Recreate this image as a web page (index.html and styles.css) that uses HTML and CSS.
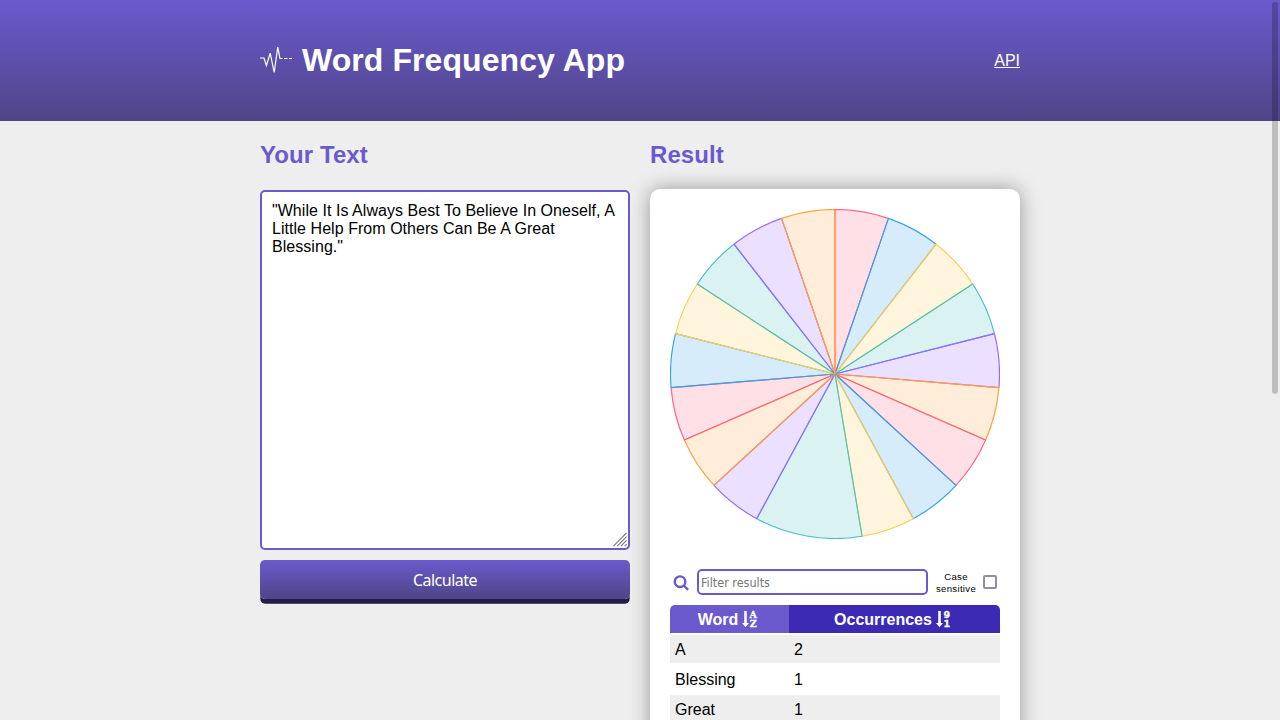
FILE: index.html
```
<!DOCTYPE html>
<html lang="en">
<head>
<meta charset="utf-8">
<title>Word Frequency App</title>
<link rel="stylesheet" href="styles.css">
</head>
<body>
<header class="header">
  <div class="container header-inner">
    <div class="brand">
      <svg class="logo" viewBox="0 0 32 32" fill="none" stroke="#fff" stroke-width="1.2"><path d="M0 14H4L6.4 21.5L10.2 9.2L14.2 28.5L17.8 3.2L20 14.5H22.4M24 14.5H27.4M29 14.5H32"/></svg>
      <h1 class="title">Word Frequency App</h1>
    </div>
    <a class="api" href="#">API</a>
  </div>
</header>
<main class="container columns">
  <section class="column">
    <h2 class="heading">Your Text</h2>
    <div class="editor">
      <textarea class="text" spellcheck="false">"While It Is Always Best To Believe In Oneself, A Little Help From Others Can Be A Great Blessing."</textarea>
      <svg class="grip" viewBox="0 0 15 15" stroke="#777" stroke-width="1.2"><path d="M.5 14.5L14.5 .5M4.5 14.5L14.5 4.5M8.5 14.5L14.5 8.5M12.5 14.5L14.5 12.5"/></svg>
    </div>
    <button class="calculate">Calculate</button>
  </section>
  <section class="column">
    <h2 class="heading">Result</h2>
    <div class="card">
      <svg class="pie" id="pie" viewBox="0 0 330 330"></svg>
      <div class="filter">
        <svg class="search" viewBox="0 0 16 16" fill="none" stroke="#6a5acd" stroke-width="2.4"><circle cx="7" cy="6.7" r="5.3"/><path d="M10.8 10.5L15.1 14.8"/></svg>
        <input class="filter-input" placeholder="Filter results">
        <label class="case"><span class="case-text">Case<br>sensitive</span><span class="box"></span></label>
      </div>
      <div class="table">
        <div class="row head">
          <div class="th"><span class="label">Word</span>
            <svg class="sort" viewBox="0 0 16 18"><path d="M2.2 1H4.8V13H7L3.5 17.2L0 13H2.2Z" fill="#fff"/><text x="11.3" y="8" class="sort-label">A</text><text x="11.3" y="17" class="sort-label">Z</text></svg>
          </div>
          <div class="th active"><span class="label">Occurrences</span>
            <svg class="sort" viewBox="0 0 16 18"><path d="M2.2 1H4.8V13H7L3.5 17.2L0 13H2.2Z" fill="#fff"/><text x="10.8" y="8" class="sort-label sort-digit">9</text><text x="10.8" y="17" class="sort-label sort-digit">1</text></svg>
          </div>
        </div>
        <div class="row shade"><div class="td">A</div><div class="td">2</div></div>
        <div class="row"><div class="td">Blessing</div><div class="td">1</div></div>
        <div class="row shade"><div class="td">Great</div><div class="td">1</div></div>
      </div>
    </div>
  </section>
</main>
<div class="scroll-thumb"></div>
<script src="script.js"></script>
</body>
</html>
```
FILE: script.js
```
const counts = [1, 1, 1, 1, 1, 1, 1, 1, 1, 2, 1, 1, 1, 1, 1, 1, 1, 1];
const colors = ["255,99,132", "54,162,235", "255,206,86", "75,192,192", "153,102,255", "255,159,64"];
const pie = document.getElementById("pie");
const total = counts.reduce((a, b) => a + b);
const radius = 164.5;
const point = n => {
  const angle = n / total * 2 * Math.PI;
  return (165 + radius * Math.sin(angle)) + " " + (165 - radius * Math.cos(angle));
};
let start = 0;
counts.forEach((count, i) => {
  const slice = document.createElementNS("http://www.w3.org/2000/svg", "path");
  slice.setAttribute("d", `M165 165L${point(start)}A${radius} ${radius} 0 0 1 ${point(start + count)}Z`);
  slice.setAttribute("fill", `rgba(${colors[i % 6]},.2)`);
  slice.setAttribute("stroke", `rgb(${colors[i % 6]})`);
  slice.setAttribute("stroke-width", "1.15");
  slice.setAttribute("stroke-linejoin", "bevel");
  pie.appendChild(slice);
  start += count;
});
```
FILE: styles.css
```
* { box-sizing: border-box; }
body { margin: 0; height: 720px; overflow: hidden; background: #eee; color: #000; font: 16px/18px "Liberation Sans", Arial, sans-serif; }
.container { width: 760px; margin: 0 auto; }
.header { height: 121px; background: linear-gradient(#6a5acd, #504588); color: #fff; }
.header-inner { display: flex; align-items: center; justify-content: space-between; height: 120px; }
.brand { display: flex; align-items: center; gap: 10px; }
.logo { width: 32px; height: 32px; }
.title { margin: 0; font-size: 32px; line-height: 37px; letter-spacing: .07px; }
.api { padding-top: 2px; color: #fff; }
.columns { display: grid; grid-template-columns: 370px 370px; gap: 20px; height: 599px; }
.heading { margin: 20px 0; font-size: 24px; line-height: 28px; letter-spacing: .08px; color: #6a5acd; }
.editor { position: relative; height: 360px; margin-top: 21px; }
.text { display: block; width: 370px; height: 360px; padding: 10px; border: 2px solid #6a5acd; border-radius: 5px; background: #fff; color: #000; font: 16px/18px "Liberation Sans", Arial, sans-serif; letter-spacing: .045px; resize: none; outline: none; }
.grip { position: absolute; right: 3px; bottom: 3px; width: 14px; height: 15px; }
.calculate { display: block; width: 370px; height: 39px; margin-top: 10px; padding: 1px 0 0; border: 0; border-radius: 5px; background: linear-gradient(#6a5acd, #504588); box-shadow: 0 5px 0 -.3px #241c49; color: #fff; font: 16px "Noto Sans", sans-serif; letter-spacing: -.5px; }
.card { height: 570px; padding: 20px; border-radius: 10px; background: #fff; box-shadow: 0 0 20px rgba(0, 0, 0, .37); }
.pie { display: block; width: 330px; height: 330px; }
.filter { display: flex; align-items: center; height: 26px; margin: 30px 0 10px; padding: 0 3px; }
.search { width: 16px; height: 16px; margin: 2px 8px 0 0; }
.filter-input { width: 231px; height: 26px; padding: 1px 2px; border: 2px solid #6a5acd; border-radius: 5px; background: #fff; font: 12.5px "DejaVu Sans Condensed", "DejaVu Sans", sans-serif; font-stretch: condensed; }
.filter-input::placeholder { color: #757575; }
.case { display: flex; align-items: center; gap: 7px; margin-left: 8px; }
.case-text { width: 40px; padding-top: 1px; font: 9.6px/12px "Liberation Sans", Arial, sans-serif; letter-spacing: .3px; text-align: center; white-space: nowrap; }
.box { width: 14px; height: 14px; border: 2px solid #8f8f9d; border-radius: 2px; background: #fff; }
.table { display: grid; gap: 2px; }
.row { display: grid; grid-template-columns: 119px 211px; height: 28px; }
.head { border-radius: 5px 5px 0 0; overflow: hidden; color: #fff; font-weight: bold; }
.th { display: flex; align-items: center; justify-content: center; gap: 4px; padding-right: 3px; background: #6a5acd; }
.label { padding-top: 1px; }
.active { background: #3d2ab4; }
.td { padding: 6px 5px 4px; }
.shade { background: #eee; }
.sort { width: 16px; height: 18px; }
.sort-label { font: bold 9.5px "DejaVu Serif", serif; fill: #fff; stroke: #fff; stroke-width: .3px; text-anchor: middle; }
.sort-digit { font-family: "DejaVu Sans", sans-serif; }
.scroll-thumb { position: absolute; top: 2px; right: 2px; width: 6px; height: 392px; border-radius: 3px; background: rgba(0, 0, 0, .2); }
```
